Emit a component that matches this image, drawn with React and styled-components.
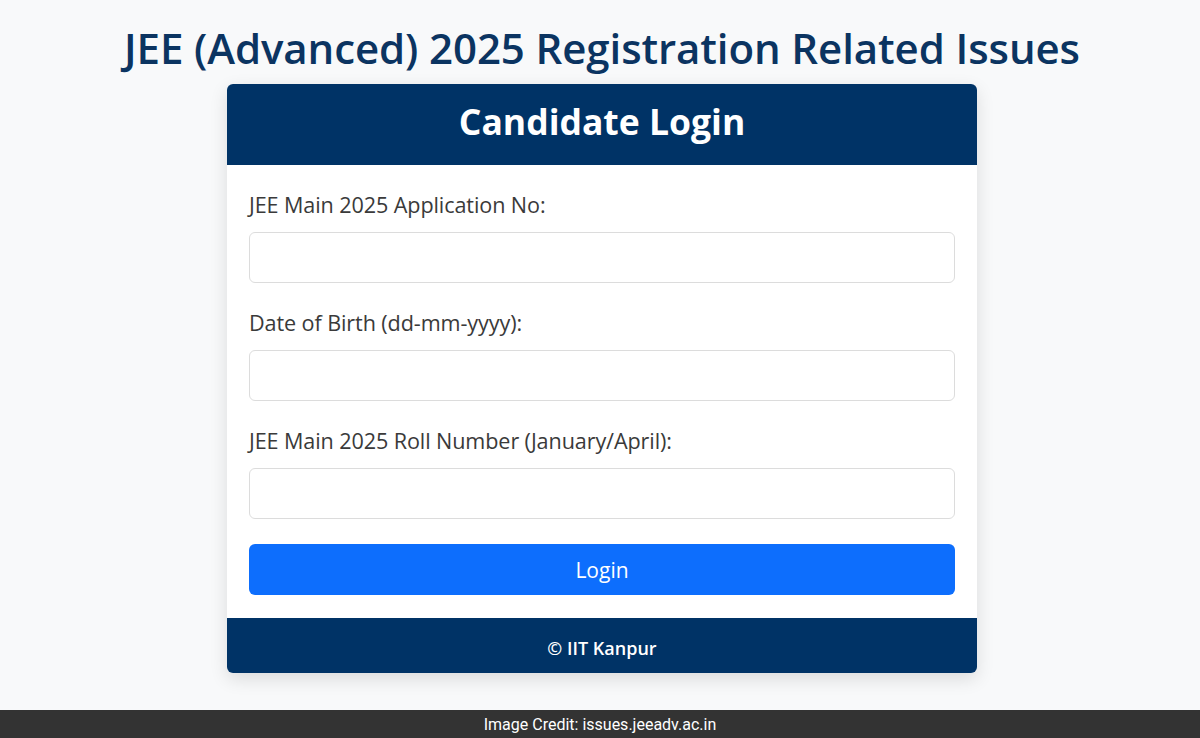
import React from "react";
import styled, { createGlobalStyle } from "styled-components";

const Global = createGlobalStyle`
  html, body { margin: 0; padding: 0; }
  body {
    background: #f8f9fa;
    font-family: "Open Sans", "Noto Sans", Arial, sans-serif;
    width: 1200px;
    height: 738px;
    overflow: hidden;
  }
`;

const Page = styled.div`
  width: 1200px;
  height: 738px;
  display: flex;
  flex-direction: column;
`;

const Main = styled.main`
  flex: 1;
  display: flex;
  flex-direction: column;
  align-items: center;
  padding-left: 4px;
  background: #f8f9fa;
`;

const Title = styled.h1`
  margin: 22px 0 0;
  height: 62px;
  font-size: 42px;
  line-height: 52px;
  font-weight: 600;
  color: #0b3461;
  text-align: center;
  letter-spacing: -0.1px;
  white-space: nowrap;
`;

const Card = styled.section`
  width: 750px;
  background: #fff;
  border-radius: 6px;
  overflow: hidden;
  box-shadow: 0 6px 18px rgba(0, 0, 0, 0.12);
  display: flex;
  flex-direction: column;
`;

const CardHeader = styled.header`
  height: 81px;
  box-sizing: border-box;
  padding-bottom: 8px;
  background: #003366;
  color: #fff;
  display: flex;
  align-items: center;
  justify-content: center;
  font-size: 35.5px;
  font-weight: 700;
`;

const Form = styled.form`
  padding: 25px 22px 23px;
  display: flex;
  flex-direction: column;
`;

const Field = styled.div`
  display: flex;
  flex-direction: column;
  margin-bottom: 25px;
`;

const Label = styled.label`
  font-size: 21.6px;
  line-height: 30px;
  color: #3a3a3a;
  margin-bottom: 12px;
  letter-spacing: -0.1px;
`;

const Input = styled.input`
  height: 51px;
  box-sizing: border-box;
  border: 1px solid #dcdcdc;
  border-radius: 6px;
  background: #fff;
  outline: none;
  font-size: 18px;
  padding: 0 12px;
`;

const Button = styled.button`
  height: 51px;
  border: none;
  border-radius: 6px;
  background: #0d6efd;
  color: #fff;
  font-family: inherit;
  font-size: 21px;
  font-weight: 500;
  cursor: pointer;
`;

const CardFooter = styled.footer`
  height: 55px;
  box-sizing: border-box;
  padding-top: 5px;
  background: #003366;
  color: #fff;
  display: flex;
  align-items: center;
  justify-content: center;
  font-size: 18px;
  font-weight: 600;
`;

const Credit = styled.div`
  height: 28px;
  background: #333333;
  color: #fff;
  display: flex;
  align-items: center;
  justify-content: center;
  font-family: "Liberation Sans Narrow", "Roboto", sans-serif;
  font-size: 16px;
`;

export default function App() {
  return (
    <Page>
      <Global />
      <Main>
        <Title>JEE (Advanced) 2025 Registration Related Issues</Title>
        <Card>
          <CardHeader>Candidate Login</CardHeader>
          <Form onSubmit={(e) => e.preventDefault()}>
            <Field>
              <Label>JEE Main 2025 Application No:</Label>
              <Input type="text" />
            </Field>
            <Field>
              <Label>Date of Birth (dd-mm-yyyy):</Label>
              <Input type="text" />
            </Field>
            <Field>
              <Label>JEE Main 2025 Roll Number (January/April):</Label>
              <Input type="text" />
            </Field>
            <Button type="submit">Login</Button>
          </Form>
          <CardFooter>© IIT Kanpur</CardFooter>
        </Card>
      </Main>
      <Credit>Image Credit: issues.jeeadv.ac.in</Credit>
    </Page>
  );
}
